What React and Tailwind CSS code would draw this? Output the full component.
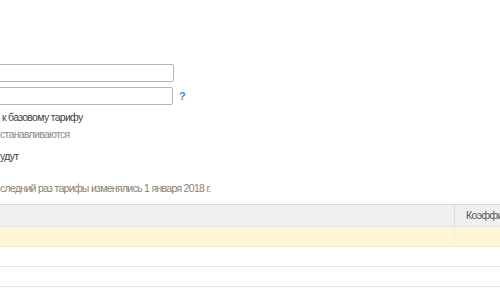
import React from 'react';

const rows = [0, 1, 2];

const App = () => {
  return (
    <div className="h-[300px] w-[500px] overflow-hidden bg-white font-['Liberation_Sans',Arial,sans-serif] text-[11px] text-[#333]">
      <div className="pt-[64px]">
        <div className="flex items-center">
          <input
            className="-ml-[8px] h-[18px] w-[182px] rounded-[2px] border border-[#b5b5b5] bg-white px-1 outline-none"
            type="text"
          />
        </div>
        <div className="mt-[5px] flex items-center">
          <input
            className="-ml-[8px] h-[18px] w-[181px] rounded-[2px] border border-[#b5b5b5] bg-white px-1 outline-none"
            type="text"
          />
          <span className="ml-[6px] text-[11px] font-bold text-[#3a8dd1]">?</span>
        </div>

        {/* narrow-ish text to match the hinted Arial of the original */}
        <div className="text-[10.5px] tracking-[-0.7px]">
          <div className="mt-[4px] pl-[2px] leading-[16px] text-[#444]">к базовому тарифу</div>
          <div className="mt-[1px] leading-[16px] text-[#888]">станавливаются</div>
          <div className="mt-[6px] leading-[16px] text-[#444]">удут</div>
          <div className="mt-[16px] leading-[16px] text-[#8b806e]">следний раз тарифы изменялись 1 января 2018 г.</div>
        </div>
      </div>

      <div className="mt-[8px] border-t border-[#d6d6d6]">
        <div className="flex h-[22px] border-b border-[#e2e2e2] bg-[#f0f0f0] text-[#555]">
          <div className="w-[455px] shrink-0 border-r border-[#dcdcdc]" />
          <div className="flex min-w-0 flex-1 items-center overflow-hidden whitespace-nowrap pl-[11px] text-[10.5px] tracking-[-0.6px]">
            Коэффициент
          </div>
        </div>
        <div className="flex h-[20px] border-b border-[#f0ead0] bg-[#fdf6d6]">
          <div className="w-[455px] shrink-0 border-r border-[#f6efcf]" />
          <div className="flex-1" />
        </div>
        {rows.map((r) => (
          <div key={r} className="h-[20px] border-b border-[#e6e6e6] bg-white" />
        ))}
      </div>
    </div>
  );
};

export default App;
